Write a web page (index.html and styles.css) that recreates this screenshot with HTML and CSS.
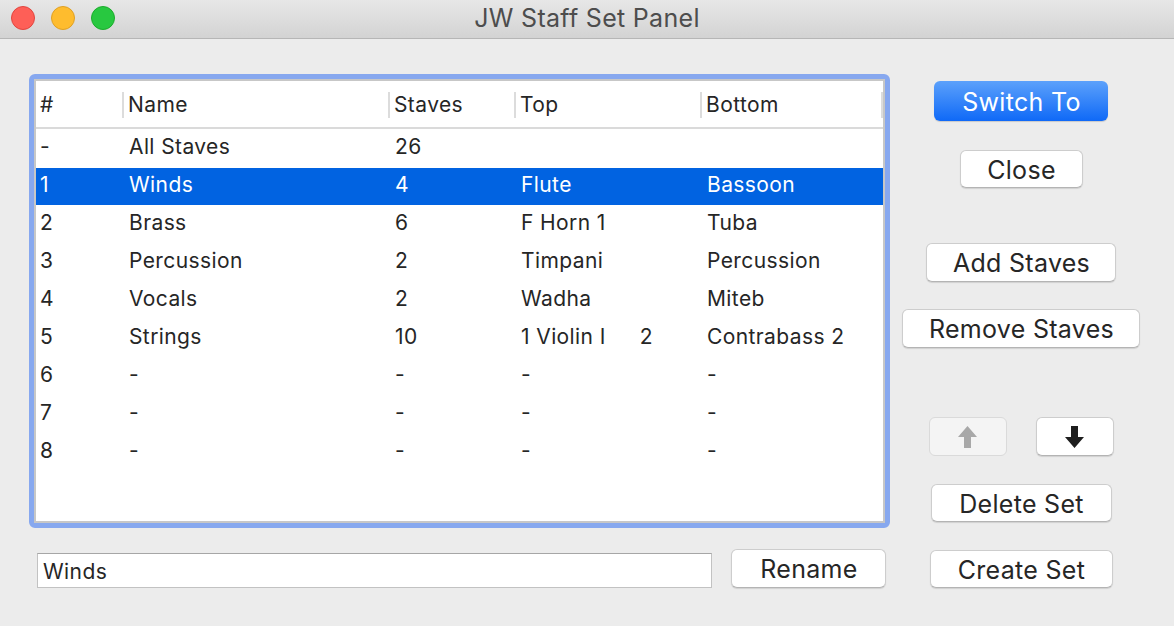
FILE: index.html
```html
<!DOCTYPE html>
<html lang="en">

<head>
  <meta charset="utf-8">
  <link rel="stylesheet" href="styles.css">
</head>

<body>
  <div class="window">
    <div class="titlebar">
      <div class="lights">
        <span class="light light-close"></span>
        <span class="light light-min"></span>
        <span class="light light-max"></span>
      </div>
      <div class="title">JW Staff Set Panel</div>
      <div></div>
    </div>

    <div class="content">
      <div class="main">
        <div class="frame">
          <div class="table">
            <div class="row head">
              <div class="cell">#</div>
              <div class="cell">Name</div>
              <div class="cell">Staves</div>
              <div class="cell">Top</div>
              <div class="cell">Bottom</div>
            </div>
            <div class="row">
              <div class="cell">-</div>
              <div class="cell">All Staves</div>
              <div class="cell">26</div>
              <div class="cell"></div>
              <div class="cell"></div>
            </div>
            <div class="row selected">
              <div class="cell">1</div>
              <div class="cell">Winds</div>
              <div class="cell">4</div>
              <div class="cell">Flute</div>
              <div class="cell">Bassoon</div>
            </div>
            <div class="row">
              <div class="cell">2</div>
              <div class="cell">Brass</div>
              <div class="cell">6</div>
              <div class="cell">F Horn 1</div>
              <div class="cell">Tuba</div>
            </div>
            <div class="row">
              <div class="cell">3</div>
              <div class="cell">Percussion</div>
              <div class="cell">2</div>
              <div class="cell">Timpani</div>
              <div class="cell">Percussion</div>
            </div>
            <div class="row">
              <div class="cell">4</div>
              <div class="cell">Vocals</div>
              <div class="cell">2</div>
              <div class="cell">Wadha</div>
              <div class="cell">Miteb</div>
            </div>
            <div class="row">
              <div class="cell">5</div>
              <div class="cell">Strings</div>
              <div class="cell">10</div>
              <div class="cell">1 Violin I<span class="tab">2</span></div>
              <div class="cell">Contrabass 2</div>
            </div>
            <div class="row">
              <div class="cell">6</div>
              <div class="cell">-</div>
              <div class="cell">-</div>
              <div class="cell">-</div>
              <div class="cell">-</div>
            </div>
            <div class="row">
              <div class="cell">7</div>
              <div class="cell">-</div>
              <div class="cell">-</div>
              <div class="cell">-</div>
              <div class="cell">-</div>
            </div>
            <div class="row">
              <div class="cell">8</div>
              <div class="cell">-</div>
              <div class="cell">-</div>
              <div class="cell">-</div>
              <div class="cell">-</div>
            </div>
          </div>
        </div>

        <div class="rename-row">
          <input class="name-field" type="text" value="Winds">
          <button class="btn btn-rename">Rename</button>
        </div>
      </div>

      <div class="actions">
        <button class="btn btn-primary btn-switch">Switch To</button>
        <button class="btn btn-close">Close</button>
        <button class="btn btn-add">Add Staves</button>
        <button class="btn btn-remove">Remove Staves</button>
        <div class="move-row">
          <button class="btn btn-move" disabled>
            <svg width="19" height="22" viewBox="0 0 19 22"><path d="M6 22h7V11h6L9.5 0 0 11h6z" fill="#a8a8a8"/></svg>
          </button>
          <button class="btn btn-move">
            <svg width="19" height="22" viewBox="0 0 19 22"><path d="M6 0h7v11h6L9.5 22 0 11h6z" fill="#1e1e1e"/></svg>
          </button>
        </div>
        <button class="btn btn-delete">Delete Set</button>
        <button class="btn btn-create">Create Set</button>
      </div>
    </div>
  </div>
</body>

</html>
```

FILE: styles.css
```css
* {
  box-sizing: border-box;
}

body {
  margin: 0;
  font: 21px/1.2 "Inter", "Helvetica Neue", Arial, sans-serif;
  letter-spacing: .4px;
  color: #262626;
  background: #ececec;
}

.window {
  width: 1174px;
  height: 626px;
  overflow: hidden;
  background: #ececec;
}
/* title bar */

.titlebar {
  display: grid;
  grid-template-columns: 1fr auto 1fr;
  align-items: center;
  height: 39px;
  padding: 0 11px 2px;
  background: linear-gradient(#e7e7e7, #d3d3d3);
  border-bottom: 1px solid #b6b6b6;
}

.lights {
  display: flex;
  gap: 16px;
}

.light {
  width: 24px;
  height: 24px;
  border-radius: 50%;
  border: 1px solid;
}

.light-close {
  background: #fe5f57;
  border-color: #e1453e;
}

.light-min {
  background: #febc2e;
  border-color: #dfa024;
}

.light-max {
  background: #28c840;
  border-color: #1cac2c;
}

.title {
  font-size: 25px;
  letter-spacing: .3px;
  color: #4d4d4d;
}
/* layout */

.content {
  display: flex;
  padding: 35px 0 0 29px;
}

.main {
  width: 861px;
}
/* table */

.frame {
  height: 454px;
  border: 5px solid #87a8ef;
  border-radius: 6px;
}

.table {
  height: 100%;
  border: 2px solid #c7c7c7;
  background: #fff;
}

.row {
  display: grid;
  grid-template-columns: 86px 266px 126px 186px 183px;
  align-items: center;
  height: 38px;
  padding-bottom: 3px;
}

.row .cell {
  padding-left: 7px;
  white-space: nowrap;
}

.row .cell:first-child {
  padding-left: 4px;
}

.row.head {
  height: 48px;
  padding: 2px 0 0;
  border-bottom: 2px solid #dadada;
}

.head .cell {
  padding-left: 6px;
  background: linear-gradient(#dcdcdc, #dcdcdc) left center / 2px 33px no-repeat;
}

.head .cell:first-child {
  background: none;
}

.head .cell:last-child {
  background:
    linear-gradient(#dcdcdc, #dcdcdc) left center / 2px 33px no-repeat,
    linear-gradient(#dcdcdc, #dcdcdc) right center / 2px 33px no-repeat;
}

.row.selected {
  color: #fff;
  background: #0163e1;
  box-shadow: inset 0 1px 0 #fff;
}

.tab {
  margin-left: 34px;
}
/* rename */

.rename-row {
  display: flex;
  align-items: flex-end;
  gap: 19px;
  margin-top: 21px;
  padding: 0 4px 0 8px;
}

.name-field {
  width: 675px;
  height: 35px;
  padding: 2px 5px 0;
  font: inherit;
  letter-spacing: inherit;
  color: #262626;
  border: 1px solid #c2c2c2;
  border-top-color: #a6a6a6;
  background: #fff;
  outline: none;
}
/* buttons */

.btn {
  height: 38px;
  padding: 2px 0 0 1px;
  font: inherit;
  font-size: 25px;
  line-height: 1;
  letter-spacing: .3px;
  color: #262626;
  background: #fff;
  border: 1px solid #cdcdcd;
  border-bottom-color: #b4b4b4;
  border-radius: 6px;
  box-shadow: 0 1px 1px rgba(0, 0, 0, .12);
}

.btn-rename {
  width: 155px;
  height: 39px;
}

.actions {
  display: flex;
  flex-direction: column;
  align-items: center;
  width: 262px;
}

.btn-primary {
  color: #fff;
  border: none;
  background: linear-gradient(#5ca1fb, #0f69f7);
  box-shadow: 0 1px 1px rgba(0, 0, 0, .15);
}

.btn-switch {
  width: 174px;
  height: 40px;
  margin-top: 7px;
}

.btn-close {
  width: 123px;
  margin-top: 29px;
}

.btn-add {
  width: 190px;
  height: 39px;
  margin-top: 55px;
}

.btn-remove {
  width: 238px;
  height: 39px;
  margin-top: 27px;
}

.move-row {
  display: flex;
  gap: 29px;
  margin-top: 69px;
}

.btn-move {
  display: flex;
  align-items: center;
  justify-content: center;
  width: 78px;
  height: 39px;
  padding: 0;
}

.btn-move[disabled] {
  background: #f4f4f4;
  border-color: #dadada;
  box-shadow: none;
}

.btn-delete {
  width: 181px;
  margin-top: 28px;
}

.btn-create {
  width: 183px;
  margin-top: 28px;
}
```
